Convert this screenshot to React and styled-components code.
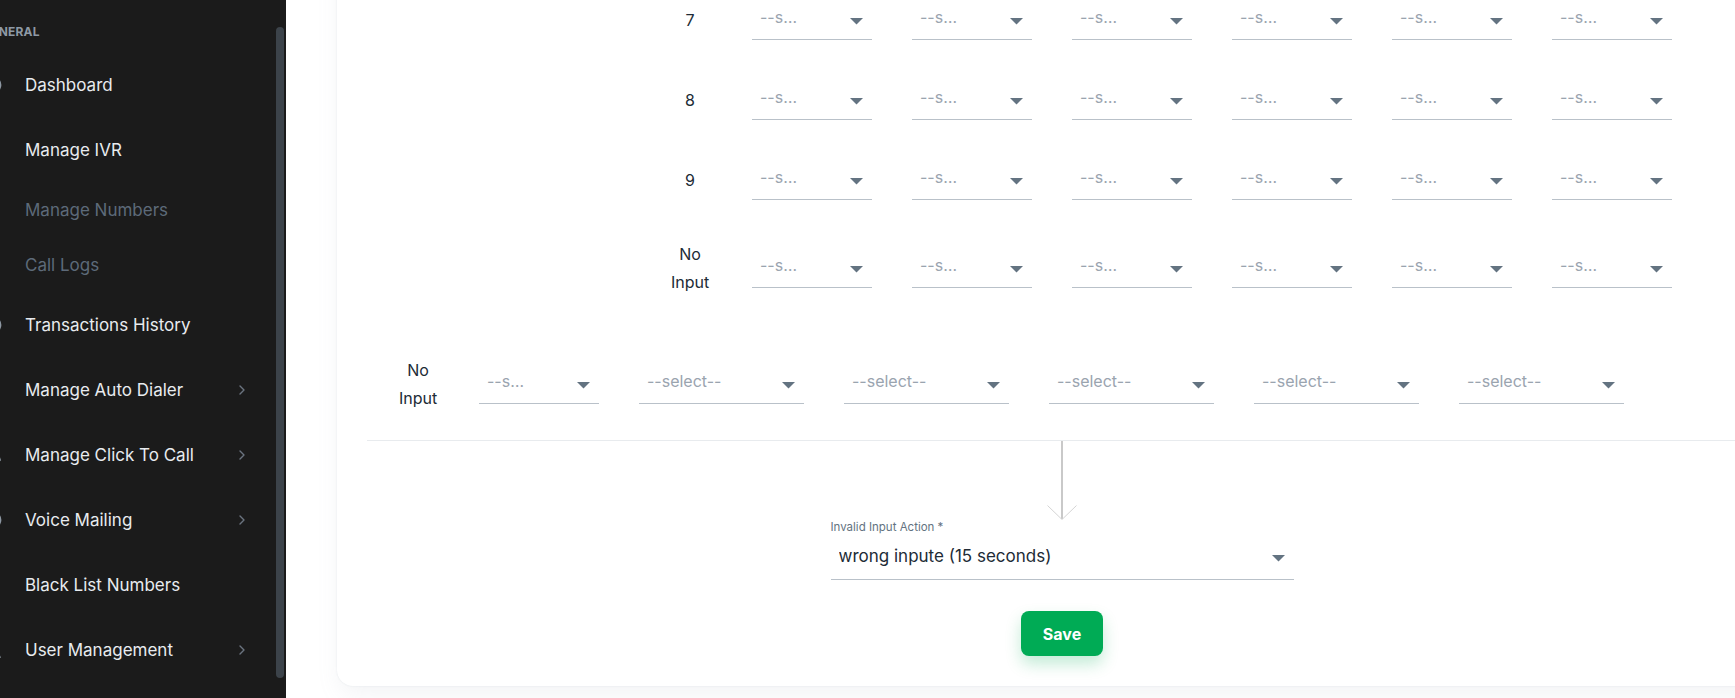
import React from 'react';
import styled, { createGlobalStyle } from 'styled-components';

const GlobalStyle = createGlobalStyle`
  html, body { margin: 0; padding: 0; height: 100%; overflow: hidden; background: #fff; }
  body { font-family: Inter, "Noto Sans", sans-serif; -webkit-font-smoothing: antialiased; }
  *, *::before, *::after { box-sizing: border-box; }
  #root { height: 100%; }
`;

const Layout = styled.div`
  display: flex;
  width: 1735px;
  height: 698px;
  overflow: hidden;
`;

/* ---------- sidebar ---------- */

const Sidebar = styled.aside`
  width: 286px;
  flex-shrink: 0;
  background: #1b1b1b;
  display: flex;
  overflow: hidden;
`;

const SideNav = styled.nav`
  flex: 1;
  min-width: 0;
  margin-left: -24px;
  padding-top: 20px;
`;

const SectionTitle = styled.div`
  height: 24px;
  line-height: 24px;
  margin-bottom: 8px;
  padding-left: 6px;
  font-size: 12px;
  font-weight: 700;
  color: #8e99a5;
  letter-spacing: 0.2px;
`;

const NavItem = styled.div`
  display: flex;
  align-items: center;
  gap: 22px;
  height: ${p => (p.$sub ? 55 : 65)}px;
  padding: 0 31px 0 7px;
  font-size: 17px;
  font-weight: 400;
  color: ${p => (p.$sub ? '#5d6a79' : '#e8ebef')};
  white-space: nowrap;
`;

const IconBox = styled.span`
  width: 20px;
  height: 20px;
  flex-shrink: 0;
  display: flex;
  align-items: center;
  justify-content: center;
  color: #8d97a2;
`;

const NavLabel = styled.span`
  flex: 1;
`;

const ScrollThumb = styled.div`
  width: 8px;
  margin: 27px 2px 20px 0;
  border-radius: 4px;
  background: #3c434a;
`;

/* ---------- main ---------- */

const Main = styled.main`
  flex: 1;
  min-width: 0;
  background: #fff;
  display: flex;
  flex-direction: column;
  justify-content: flex-end;
  padding: 0 0 12px 51px;
  overflow: hidden;
`;

const Card = styled.section`
  width: 1450px;
  flex-shrink: 0;
  background: #fff;
  border-radius: 16px;
  box-shadow: 0 0 2px 0 rgba(145, 158, 171, 0.2), 0 12px 24px -4px rgba(145, 158, 171, 0.12);
  padding: 0 30px 30px;
  display: flex;
  flex-direction: column;
`;

const NestedBlock = styled.div`
  display: flex;
  flex-direction: column;
  gap: 40px;
  padding-left: 293px;
  margin-bottom: 60px;
`;

const OuterBlock = styled.div`
  padding: 0 0 28px 21px;
  border-bottom: 1px solid #e8ebee;
`;

const KeyRow = styled.div`
  display: flex;
  align-items: center;
  gap: ${p => p.$gap}px;
`;

const KeyLabel = styled.div`
  width: 60px;
  flex-shrink: 0;
  text-align: center;
  font-size: 16px;
  line-height: 28px;
  color: #212b36;
`;

const Selects = styled.div`
  display: flex;
  gap: 40px;
`;

const SelectBox = styled.div`
  width: ${p => p.$width}px;
  height: ${p => p.$height || 40}px;
  flex-shrink: 0;
  display: flex;
  align-items: center;
  padding: 0 9px 0 8px;
  border-bottom: 1px solid #b9c1c9;
`;

const SelectValue = styled.span`
  flex: 1;
  min-width: 0;
  font-size: ${p => (p.$filled ? 17 : 16)}px;
  color: ${p => (p.$filled ? '#212b36' : '#9aa4af')};
  white-space: nowrap;
  overflow: hidden;
  text-overflow: ellipsis;
  margin-top: ${p => (p.$filled ? -1 : -5)}px;
`;

const ValueClip = styled.span`
  display: block;
  max-width: ${p => p.$max}px;
  overflow: hidden;
  text-overflow: ellipsis;
`;

const Caret = styled.svg`
  flex-shrink: 0;
  margin-top: 3px;
`;

const FlowArrow = styled.svg`
  display: block;
  align-self: center;
`;

const Field = styled.div`
  align-self: center;
  display: flex;
  flex-direction: column;
`;

const FieldLabel = styled.label`
  font-size: 11.5px;
  line-height: 14px;
  color: #637381;
`;

const SaveButton = styled.button`
  align-self: center;
  margin-top: 31px;
  height: 45px;
  padding: 0 22px;
  border: 0;
  border-radius: 8px;
  background: #00ab55;
  color: #fff;
  font-family: inherit;
  font-size: 16px;
  font-weight: 700;
  box-shadow: 0 8px 16px 0 rgba(0, 171, 85, 0.24);
  cursor: pointer;
`;

/* ---------- small drawings ---------- */

const DropCaret = () => (
  <Caret width="13" height="7" viewBox="0 0 13 7">
    <polygon points="0,0 13,0 6.5,6.5" fill="#637381" />
  </Caret>
);

const Chevron = () => (
  <svg width="6" height="10" viewBox="0 0 6 10">
    <path d="M1 1l4 4-4 4" fill="none" stroke="#6b7480" strokeWidth="1.4" strokeLinecap="round" strokeLinejoin="round" />
  </svg>
);

const NavIcon = ({ kind }) => (
  <IconBox>
    <svg width="20" height="20" viewBox="0 0 20 20" fill="none" stroke="currentColor" strokeWidth="1.8">
      {kind === 'circle' && <circle cx="10" cy="10" r="7.5" />}
      {kind === 'bars' && <path d="M3 17h14M5 14V8M10 14V4M15 14v-5" />}
      {kind === 'stack' && <path d="M4 6h12M4 10h12M4 14h12" />}
      {kind === 'phone' && <path d="M5 3l3 1 1 4-2 1a9 9 0 0 0 4 4l1-2 4 1 1 3-2 2C9 17 3 11 3 5z" />}
      {kind === 'user' && <path d="M10 10a3.5 3.5 0 1 0 0-7 3.5 3.5 0 0 0 0 7zM3 18c1-4 4-5.5 7-5.5s6 1.5 7 5.5" />}
    </svg>
  </IconBox>
);

/* ---------- data ---------- */

const navItems = [
  { label: 'Dashboard', icon: 'circle' },
  { label: 'Manage IVR', icon: 'bars' },
  { label: 'Manage Numbers', sub: true },
  { label: 'Call Logs', sub: true },
  { label: 'Transactions History', icon: 'circle' },
  { label: 'Manage Auto Dialer', icon: 'stack', more: true },
  { label: 'Manage Click To Call', icon: 'phone', more: true },
  { label: 'Voice Mailing', icon: 'circle', more: true },
  { label: 'Black List Numbers', icon: 'bars' },
  { label: 'User Management', icon: 'user', more: true },
];

const nestedKeys = ['6', '7', '8', '9', 'No Input'];
const outerWidths = [120, 165, 165, 165, 165, 165];

const Select = ({ width, height, value = '--select--', filled, max }) => (
  <SelectBox $width={width} $height={height}>
    <SelectValue $filled={filled}>
      {max ? <ValueClip $max={max}>{value}</ValueClip> : value}
    </SelectValue>
    <DropCaret />
  </SelectBox>
);

const App = () => {
  return (
    <Layout>
      <GlobalStyle />
      <Sidebar>
        <SideNav>
          <SectionTitle>GENERAL</SectionTitle>
          {navItems.map(item => (
            <NavItem key={item.label} $sub={item.sub}>
              {item.sub ? <IconBox /> : <NavIcon kind={item.icon} />}
              <NavLabel>{item.label}</NavLabel>
              {item.more && <Chevron />}
            </NavItem>
          ))}
        </SideNav>
        <ScrollThumb />
      </Sidebar>

      <Main>
        <Card>
          <NestedBlock>
            {nestedKeys.map(key => (
              <KeyRow key={key} $gap={32}>
                <KeyLabel>{key}</KeyLabel>
                <Selects>
                  {[0, 1, 2, 3, 4, 5].map(i => (
                    <Select key={i} width={120} max={38} />
                  ))}
                </Selects>
              </KeyRow>
            ))}
          </NestedBlock>

          <OuterBlock>
            <KeyRow $gap={31}>
              <KeyLabel>No Input</KeyLabel>
              <Selects>
                {outerWidths.map((w, i) => (
                  <Select key={i} width={w} max={w === 120 ? 38 : 0} />
                ))}
              </Selects>
            </KeyRow>
          </OuterBlock>

          <FlowArrow width="32" height="79" viewBox="0 0 32 79">
            <line x1="16" y1="0" x2="16" y2="78" stroke="#c9c9c9" strokeWidth="2" />
            <path d="M1.5 64.5L16 78.5 30.5 64.5" fill="none" stroke="#d4d4d4" strokeWidth="1" />
          </FlowArrow>

          <Field>
            <FieldLabel>Invalid Input Action *</FieldLabel>
            <Select width={463} height={46} value="wrong inpute (15 seconds)" filled />
          </Field>

          <SaveButton>Save</SaveButton>
        </Card>
      </Main>
    </Layout>
  );
};

export default App;
